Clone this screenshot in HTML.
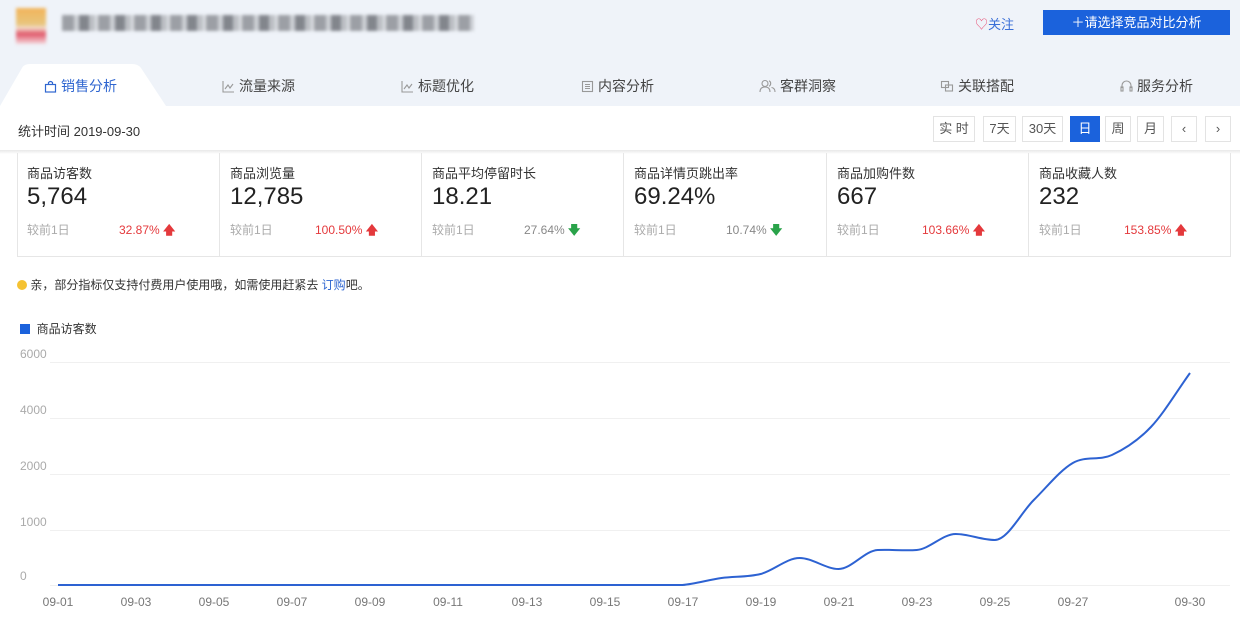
<!DOCTYPE html>
<html><head><meta charset="utf-8"><style>
*{margin:0;padding:0;box-sizing:border-box}
body{width:1240px;height:621px;overflow:hidden;background:#fff;font-family:"Liberation Sans","Noto Sans CJK SC",sans-serif;color:#333;position:relative}
.abs{position:absolute}
.hdr{left:0;top:0;width:1240px;height:106px;background:#eff3f9}
.tab{top:76px;font-size:14px;color:#444;white-space:nowrap}
.tab svg{vertical-align:-2px;margin-right:4px}
.btn{top:116px;height:26px;border:1px solid #e3e3e3;font-size:13px;color:#555;text-align:center;line-height:24px;background:#fff}
.card{top:153px;height:104px;border-right:1px solid #e6e6e6;padding:10px 0 0 10px}
.card .t{font-size:13px;color:#333}
.card .v{font-size:24px;color:#222;margin-top:1px;line-height:28px}
.card .c{font-size:12px;color:#aaa;margin-top:10px;position:relative}
.card .p{position:absolute;top:0;font-size:12px}
.red{color:#e4393c}.grn{color:#888}
</style></head><body>
<div class="abs hdr"></div>
<div class="abs" style="left:16px;top:8px;width:30px;height:36px;filter:blur(1.5px);background:linear-gradient(180deg,#f2b45a 0,#e8c57d 45%,#f3dccb 55%,#e0586a 72%,#f5d8dc 100%)"></div>
<div class="abs" style="left:62px;top:15px;width:412px;height:16px;filter:blur(1.6px);background:repeating-linear-gradient(90deg,#8e9197 0 12px,#c8cbd0 12px 17px,#70737a 17px 27px,#b4b7bc 27px 33px,#dcdee2 33px 36px);opacity:.85"></div>
<div class="abs" style="left:975px;top:14px;font-size:13px;color:#3a6fd8"><span style="color:#e8557a">♡</span>关注</div>
<div class="abs" style="left:1043px;top:10px;width:187px;height:25px;background:#1b62dc;color:#fff;font-size:13px;text-align:center;line-height:25px">＋请选择竞品对比分析</div>
<svg class="abs" style="left:0;top:64px" width="170" height="42"><path d="M0 42 L22 4 Q24 0 30 0 L132 0 Q138 0 141 4 L166 42 Z" fill="#fff"/></svg>
<div class="abs tab" style="left:44px;color:#2f66d0"><svg width="13" height="13" viewBox="0 0 13 13" fill="none" stroke="#2f66d0" stroke-width="1.2"><rect x="1.5" y="4.5" width="10" height="7.5"/><path d="M4.5 4.5V2.5Q6.5 0.5 8.5 2.5V4.5"/></svg>销售分析</div>
<div class="abs tab" style="left:222px"><svg width="13" height="13" viewBox="0 0 13 13" fill="none" stroke="#999" stroke-width="1.1"><path d="M1 1V12H12M3 9L6 5L8 8L11 4"/></svg>流量来源</div>
<div class="abs tab" style="left:401px"><svg width="13" height="13" viewBox="0 0 13 13" fill="none" stroke="#999" stroke-width="1.1"><path d="M1 1V12H12M3 9L6 5L8 8L11 4"/></svg>标题优化</div>
<div class="abs tab" style="left:581px"><svg width="13" height="13" viewBox="0 0 13 13" fill="none" stroke="#999" stroke-width="1.1"><rect x="1.5" y="1.5" width="10" height="10"/><path d="M4 4.5H9M4 6.5H9M4 8.5H9"/></svg>内容分析</div>
<div class="abs tab" style="left:759px"><svg width="17" height="14" viewBox="0 0 17 14" fill="none" stroke="#999" stroke-width="1.1"><circle cx="6" cy="4.5" r="3"/><path d="M1 13Q1 8 6 8Q11 8 11 13"/><path d="M10 1.8A3 3 0 0 1 10 7.2M12.5 8.5Q16 9 16 13"/></svg>客群洞察</div>
<div class="abs tab" style="left:940px"><svg width="14" height="13" viewBox="0 0 14 13" fill="none" stroke="#999" stroke-width="1.1"><rect x="1.5" y="1.5" width="7" height="6"/><rect x="5.5" y="5" width="7" height="6"/></svg>关联搭配</div>
<div class="abs tab" style="left:1120px"><svg width="13" height="14" viewBox="0 0 13 14" fill="none" stroke="#999" stroke-width="1.1"><path d="M2 9V6.5A4.5 4.5 0 0 1 11 6.5V9"/><rect x="1" y="8" width="2" height="4"/><rect x="10" y="8" width="2" height="4"/></svg>服务分析</div>
<div class="abs" style="left:18px;top:121px;font-size:13px;color:#333">统计时间 2019-09-30</div>
<div class="abs btn" style="left:933px;width:42px">实 时</div>
<div class="abs btn" style="left:983px;width:33px">7天</div>
<div class="abs btn" style="left:1022px;width:41px">30天</div>
<div class="abs btn" style="left:1070px;width:30px;background:#1b62dc;color:#fff;border-color:#1b62dc">日</div>
<div class="abs btn" style="left:1105px;width:26px">周</div>
<div class="abs btn" style="left:1137px;width:27px">月</div>
<div class="abs btn" style="left:1171px;width:26px">‹</div>
<div class="abs btn" style="left:1205px;width:26px">›</div>
<div class="abs" style="left:0;top:150px;width:1240px;height:4px;background:linear-gradient(#e8e8e8,#fff)"></div>
<div class="abs" style="left:17px;top:153px;width:1214px;height:104px;border:1px solid #e6e6e6;border-top:none"></div>
<div class="abs card" style="left:17px;width:203px"><div class="t">商品访客数</div><div class="v">5,764</div><div class="c">较前1日<span class="p red" style="left:92px">32.87% <b>🡅</b></span></div></div>
<div class="abs card" style="left:220px;width:202px"><div class="t">商品浏览量</div><div class="v">12,785</div><div class="c">较前1日<span class="p red" style="left:85px">100.50% <b>🡅</b></span></div></div>
<div class="abs card" style="left:422px;width:202px"><div class="t">商品平均停留时长</div><div class="v">18.21</div><div class="c">较前1日<span class="p grn" style="left:92px">27.64% <b style="color:#2aa34a">🡇</b></span></div></div>
<div class="abs card" style="left:624px;width:203px"><div class="t">商品详情页跳出率</div><div class="v">69.24%</div><div class="c">较前1日<span class="p grn" style="left:92px">10.74% <b style="color:#2aa34a">🡇</b></span></div></div>
<div class="abs card" style="left:827px;width:202px"><div class="t">商品加购件数</div><div class="v">667</div><div class="c">较前1日<span class="p red" style="left:85px">103.66% <b>🡅</b></span></div></div>
<div class="abs card" style="left:1029px;width:202px;border-right:none"><div class="t">商品收藏人数</div><div class="v">232</div><div class="c">较前1日<span class="p red" style="left:85px">153.85% <b>🡅</b></span></div></div>
<div class="abs" style="left:17px;top:276px;font-size:12px;color:#333"><span style="display:inline-block;width:10px;height:10px;border-radius:50%;background:#f5c232;vertical-align:-1px"></span> 亲，部分指标仅支持付费用户使用哦，如需使用赶紧去 <span style="color:#2f66d0">订购</span>吧。</div>
<div class="abs" style="left:20px;top:320px;font-size:12px;color:#333"><span style="display:inline-block;width:10px;height:10px;background:#1b62dc;vertical-align:-1px"></span>&nbsp; 商品访客数</div>
<svg class="abs" style="left:0;top:340px" width="1240" height="281">
<g stroke="#f0f0f0" stroke-width="1">
<line x1="50" y1="22.5" x2="1230" y2="22.5"/><line x1="50" y1="78.5" x2="1230" y2="78.5"/><line x1="50" y1="134.5" x2="1230" y2="134.5"/><line x1="50" y1="190.5" x2="1230" y2="190.5"/><line x1="50" y1="245.5" x2="1230" y2="245.5"/></g>
<g font-family="Liberation Sans" font-size="12" fill="#aaa">
<text x="20" y="18">6000</text><text x="20" y="74">4000</text><text x="20" y="130">2000</text><text x="20" y="186">1000</text><text x="20" y="240">0</text></g>
<g font-family="Liberation Sans" font-size="12" fill="#777" text-anchor="middle">
<text x="58" y="266">09-01</text><text x="136" y="266">09-03</text><text x="214" y="266">09-05</text><text x="292" y="266">09-07</text><text x="370" y="266">09-09</text><text x="448" y="266">09-11</text><text x="527" y="266">09-13</text><text x="605" y="266">09-15</text><text x="683" y="266">09-17</text><text x="761" y="266">09-19</text><text x="839" y="266">09-21</text><text x="917" y="266">09-23</text><text x="995" y="266">09-25</text><text x="1073" y="266">09-27</text><text x="1190" y="266">09-30</text></g>
<g transform="translate(0,-340)"><path fill="none" stroke="#2d62d2" stroke-width="2" d="M58 585 L682.5 585 C695.5,583.8 708.5,579.8 721.5,578 C734.5,576.2 747.6,577.3 760.6,574 C773.6,570.7 786.6,558 799.6,558 C812.6,558 825.6,569 838.6,569 C851.6,569 864.7,550.7 877.7,550 C890.7,549.3 903.7,551 916.7,550 C929.7,549 942.7,534 955.7,534 C968.7,534 981.8,540 994.8,540 C1007.8,540 1020.8,512.8 1033.8,500 C1046.8,487.2 1059.8,470.5 1072.8,463 C1085.8,455.5 1098.9,461 1111.9,455 C1124.9,449 1137.9,440.7 1150.9,427 C1163.9,413.3 1177,391 1190,373"/></g>
</svg>
</body></html>
